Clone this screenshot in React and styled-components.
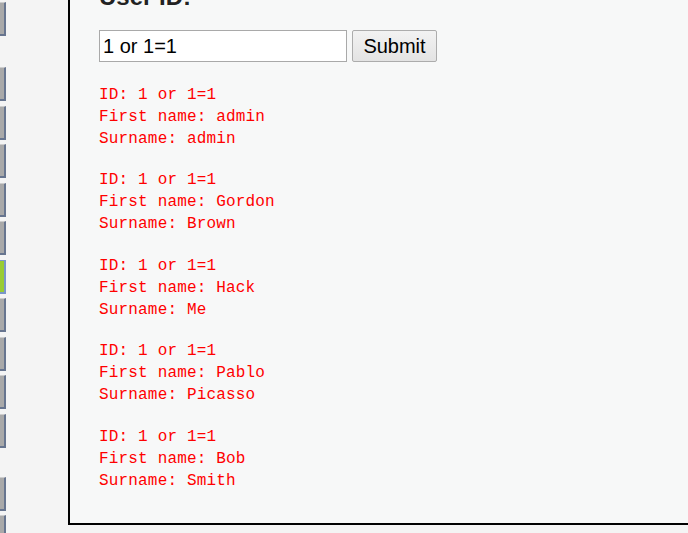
import React from "react";
import styled, { createGlobalStyle } from "styled-components";

const GlobalStyle = createGlobalStyle`
  html, body {
    margin: 0;
    padding: 0;
    background: #f4f4f4;
    overflow: hidden;
  }
  body {
    font-family: "Liberation Sans", Arial, sans-serif;
  }
`;

const Page = styled.div`
  display: flex;
  align-items: flex-start;
  width: 688px;
  height: 533px;
  overflow: hidden;
`;

const Side = styled.div`
  width: 68px;
  flex: none;
  display: flex;
  flex-direction: column;
  margin-top: 2px;
`;

const Group = styled.div`
  display: flex;
  flex-direction: column;
  gap: 4.5px;
  margin-bottom: ${(p) => p.$after || 0}px;
`;

const MenuBtn = styled.div`
  width: 4px;
  height: 31px;
  background: ${(p) => (p.$active ? "#99cc33" : "#a9a9a9")};
  border-top: 1px solid ${(p) => (p.$active ? "#7a96c8" : "#cdcdcd")};
  border-right: 2px solid ${(p) => (p.$active ? "#7a96c8" : "#67758f")};
  border-bottom: 2px solid ${(p) => (p.$active ? "#7a96c8" : "#67758f")};
`;

const Panel = styled.div`
  flex: 1;
  background: #f7f8f8;
  border-left: 2px solid #000;
  border-bottom: 2px solid #000;
  padding: 0 0 0 29px;
  box-sizing: border-box;
  height: 525px;
`;

const Heading = styled.h2`
  margin: -17px 0 19px;
  font-size: 24px;
  font-weight: bold;
  line-height: 28px;
  color: #222;
`;

const Form = styled.form`
  display: flex;
  align-items: center;
  gap: 5px;
  margin: 0 0 21.5px;
`;

const Input = styled.input`
  width: 248px;
  height: 32px;
  box-sizing: border-box;
  border: 1px solid #a9a9a9;
  background: #fff;
  padding: 0 3px;
  font-family: "Liberation Sans", Arial, sans-serif;
  font-size: 20px;
  color: #000;
  outline: none;
`;

const Button = styled.button`
  width: 85px;
  height: 32px;
  box-sizing: border-box;
  border: 1px solid #acacac;
  border-radius: 2px;
  background: linear-gradient(#f2f2f2, #e3e3e3);
  font-family: "Liberation Sans", Arial, sans-serif;
  font-size: 20px;
  color: #000;
  padding: 0;
`;

const Result = styled.pre`
  margin: 0 0 19.5px;
  font-family: "Liberation Mono", "Courier New", monospace;
  font-size: 16px;
  letter-spacing: 0.17px;
  line-height: 22px;
  color: #ff0000;
`;

const users = [
  ["admin", "admin"],
  ["Gordon", "Brown"],
  ["Hack", "Me"],
  ["Pablo", "Picasso"],
  ["Bob", "Smith"],
];

export default function App() {
  return (
    <>
      <GlobalStyle />
      <Page>
        <Side>
          <Group $after={31}>
            <MenuBtn />
          </Group>
          <Group $after={29}>
            {Array.from({ length: 10 }).map((_, i) => (
              <MenuBtn key={i} $active={i === 5} />
            ))}
          </Group>
          <Group>
            <MenuBtn />
            <MenuBtn />
          </Group>
        </Side>
        <Panel>
          <Heading>User ID:</Heading>
          <Form onSubmit={(e) => e.preventDefault()}>
            <Input defaultValue="1 or 1=1" />
            <Button type="submit">Submit</Button>
          </Form>
          {users.map(([first, last]) => (
            <Result key={first}>
              {`ID: 1 or 1=1\nFirst name: ${first}\nSurname: ${last}`}
            </Result>
          ))}
        </Panel>
      </Page>
    </>
  );
}
